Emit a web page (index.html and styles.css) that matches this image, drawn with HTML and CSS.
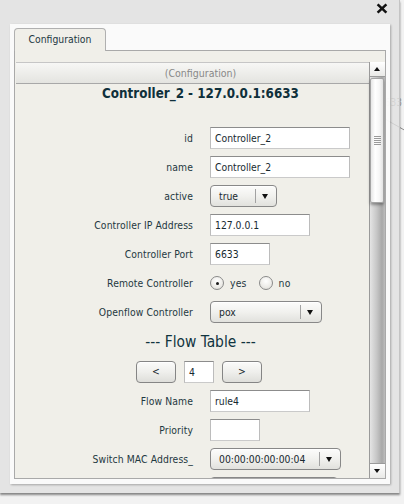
FILE: index.html
```html
<!DOCTYPE html>
<html>
<head>
<meta charset="utf-8">
<title>Configuration</title>
<link rel="stylesheet" href="styles.css">
</head>
<body>
<div class="canvas">
  <span class="node-label">6633</span>
  <svg class="edge" width="22" height="16" viewBox="0 0 22 16"><line x1="1" y1="3" x2="22" y2="15"/></svg>
</div>
<div class="dialog">
  <button class="close" type="button" aria-label="close">
    <svg width="12" height="11" viewBox="0 0 12 11"><path d="M1.6 1.3 L10.4 9.7 M10.4 1.3 L1.6 9.7"/></svg>
  </button>
  <div class="panel">
    <div class="tabs"><div class="tab">Configuration</div></div>
    <div class="pane">
      <div class="scrollpane">
        <div class="header">(Configuration)</div>
        <div class="content">
          <h1 class="title">Controller_2 - 127.0.0.1:6633</h1>
          <div class="form">
            <span class="label">id</span>
            <div class="text w140">Controller_2</div>

            <span class="label">name</span>
            <div class="text w140">Controller_2</div>

            <span class="label">active</span>
            <div class="combo w67"><span class="combo-value">true</span><span class="combo-arrow"></span></div>

            <span class="label">Controller IP Address</span>
            <div class="text w100">127.0.0.1</div>

            <span class="label">Controller Port</span>
            <div class="text w60">6633</div>

            <span class="label">Remote Controller</span>
            <div class="radios">
              <span class="radio on"></span><span class="radio-text">yes</span>
              <span class="radio"></span><span class="radio-text">no</span>
            </div>

            <span class="label">Openflow Controller</span>
            <div class="combo w112"><span class="combo-value">pox</span><span class="combo-arrow"></span></div>

            <div class="section">--- Flow Table ---</div>

            <div class="nav">
              <div class="btn">&lt;</div>
              <div class="text w30">4</div>
              <div class="btn">&gt;</div>
            </div>

            <span class="label">Flow Name</span>
            <div class="text w100">rule4</div>

            <span class="label">Priority</span>
            <div class="text w50"></div>

            <span class="label">Switch MAC Address_</span>
            <div class="combo w131"><span class="combo-value">00:00:00:00:00:04</span><span class="combo-arrow"></span></div>

            <span class="label"></span>
            <div class="combo w128"><span class="combo-value"></span><span class="combo-arrow"></span></div>
          </div>
        </div>
        <div class="scrollbar">
          <div class="sb-btn"><span class="tri-up"></span></div>
          <div class="sb-track">
            <div class="sb-thumb"><span class="grip"></span></div>
          </div>
          <div class="sb-btn down"><span class="tri-down"></span></div>
        </div>
      </div>
    </div>
  </div>
</div>
</body>
</html>
```
FILE: styles.css
```css
* { box-sizing: border-box; }

html, body {
  margin: 0;
  padding: 0;
}

body {
  width: 404px;
  height: 504px;
  overflow: hidden;
  position: relative;
  background: #f2f2f2;
  font-family: "DejaVu Sans Condensed", "DejaVu Sans", sans-serif;
  font-stretch: condensed;
  color: #1e3841;
}

/* background graph canvas */
.canvas { position: absolute; left: 0; top: 0; width: 404px; height: 504px; }
.node-label {
  position: absolute;
  right: 2px;
  top: 97px;
  font-size: 10px;
  line-height: 12px;
  color: #a4a4a4;
}
.edge { position: absolute; left: 384px; top: 116px; }
.edge line { stroke: #8e8e8e; stroke-width: 1; }

/* dialog */
.dialog {
  position: absolute;
  left: 0;
  top: 0;
  width: 400px;
  height: 493px;
  padding: 24px 9px 9px 10px;
  background: rgba(224, 224, 224, 0.78);
  border-right: 1px solid #c4c4c4;
  box-shadow: 0 2px 2px rgba(0, 0, 0, 0.45);
}

.close {
  position: absolute;
  left: 376px;
  top: 3px;
  width: 12px;
  height: 11px;
  padding: 0;
  border: 0;
  background: none;
  display: block;
}
.close svg { display: block; }
.close path { stroke: #111; stroke-width: 2.5; fill: none; }

.panel {
  height: 460px;
  padding: 4px 4px 5px 4px;
  background: rgba(255, 255, 255, 0.82);
  box-shadow: 1px 1px 2px rgba(0, 0, 0, 0.28);
}

.tabs { display: flex; }
.tab {
  position: relative;
  z-index: 1;
  width: 92px;
  height: 23px;
  margin-bottom: -1px;
  border: 1px solid #b0b0b0;
  border-bottom: 0;
  border-radius: 4px 4px 0 0;
  background: #f0efe9;
  text-align: center;
  font-size: 10.3px;
  line-height: 21px;
  color: #1c3742;
}

.pane {
  height: 429px;
  border: 1px solid #a9a9a9;
  background: #f0efe9;
  padding: 11px 0 0 1px;
}

.scrollpane {
  position: relative;
  height: 416px;
  overflow: hidden;
}

.header {
  height: 22px;
  border-top: 1px solid #c6c6c6;
  border-bottom: 1px solid #a8a8a8;
  background: linear-gradient(#f7f7f5, #e4e4e0);
  text-align: center;
  font-size: 10.5px;
  line-height: 20px;
  color: #888888;
}

.content { padding-top: 2px; }

.title {
  margin: 0;
  text-align: center;
  font-size: 13.3px;
  font-weight: bold;
  line-height: 16px;
  color: #0f303b;
}

.form {
  display: grid;
  grid-template-columns: 177px 1fr;
  column-gap: 17px;
  row-gap: 7px;
  align-items: center;
  margin-top: 25px;
}

.label {
  text-align: right;
  white-space: nowrap;
  font-size: 10.3px;
  letter-spacing: 0.1px;
  color: #1e3841;
}

.text {
  height: 22px;
  background: #fff;
  border: 1px solid;
  border-color: #8c8c8c #bcbcbc #cacaca #bcbcbc;
  padding: 0 4px;
  font-size: 10.3px;
  line-height: 20px;
  color: #18292f;
  white-space: nowrap;
}
.w30 { width: 30px; }
.w50 { width: 50px; }
.w60 { width: 60px; }
.w100 { width: 100px; }
.w140 { width: 140px; }
.w67 { width: 67px; }
.w112 { width: 112px; }
.w128 { width: 128px; }
.w131 { width: 131px; }

.combo {
  height: 22px;
  display: flex;
  align-items: center;
  border: 1px solid #888;
  border-radius: 4px;
  background: linear-gradient(#fcfcfb, #f1f1ee 50%, #e1e1dd);
  box-shadow: inset 0 1px 0 #fff;
}
.combo-value {
  flex: 1;
  padding-left: 8px;
  font-size: 10.3px;
  color: #18292f;
  white-space: nowrap;
}
.combo-arrow {
  width: 21px;
  height: 14px;
  border-left: 1px solid #a2a2a2;
  position: relative;
}
.combo-arrow::after {
  content: "";
  position: absolute;
  left: 6px;
  top: 5px;
  border-left: 3.5px solid transparent;
  border-right: 3.5px solid transparent;
  border-top: 5px solid #111;
}

.radios {
  height: 22px;
  display: flex;
  align-items: center;
}
.radio {
  width: 14px;
  height: 14px;
  border-radius: 50%;
  border: 1px solid #8a8a8a;
  background: radial-gradient(circle at 50% 35%, #ffffff, #ecebe7 60%, #d8d8d4);
  position: relative;
}
.radio.on::after {
  content: "";
  position: absolute;
  left: 4.5px;
  top: 4.5px;
  width: 3px;
  height: 3px;
  border-radius: 50%;
  background: #1a1a1a;
}
.radio-text {
  margin-left: 6px;
  margin-right: 12px;
  font-size: 10.3px;
  letter-spacing: 0.2px;
  color: #1e3841;
}

.section {
  grid-column: 1 / -1;
  height: 24px;
  text-align: center;
  font-size: 15.4px;
  line-height: 24px;
  color: #10343f;
}

.nav {
  grid-column: 1 / -1;
  display: flex;
  justify-content: center;
  gap: 8px;
  margin-right: 3px;
}
.btn {
  width: 40px;
  height: 22px;
  border: 1px solid #858585;
  border-radius: 4px;
  background: linear-gradient(#fbfbfa, #efefec 50%, #dededa);
  box-shadow: inset 0 1px 0 #fff;
  text-align: center;
  font-size: 10.3px;
  line-height: 19px;
  color: #18292f;
}

/* scrollbar overlays right edge of the viewport */
.scrollbar {
  position: absolute;
  top: 0;
  right: 0;
  width: 16px;
  height: 416px;
  border-left: 1px solid #9a9a9a;
  display: flex;
  flex-direction: column;
  background: #f0f0ee;
}
.sb-btn {
  height: 15px;
  border-bottom: 1px solid #9a9a9a;
  background: linear-gradient(#ffffff, #e9e9e7);
  position: relative;
}
.sb-btn.down {
  border-bottom: 0;
  border-top: 1px solid #9a9a9a;
}
.tri-up, .tri-down {
  position: absolute;
  left: 4px;
  border-left: 3.5px solid transparent;
  border-right: 3.5px solid transparent;
}
.tri-up { top: 5px; border-bottom: 4px solid #111; }
.tri-down { top: 5px; border-top: 4px solid #111; }

.sb-track {
  flex: 1;
  padding: 1px 1px 0 0;
  background: linear-gradient(to right, #e4e4e4, #c6c6c6 45%, #a8a8a8 80%, #bdbdbd);
}
.sb-thumb {
  height: 125px;
  border: 1px solid #a4a4a4;
  border-radius: 2px;
  background: linear-gradient(to right, #e6e6e6, #ffffff 35%, #f6f6f6 70%, #e2e2e2);
  box-shadow: 0 2px 3px rgba(0, 0, 0, 0.35);
  display: flex;
  align-items: center;
  justify-content: center;
}
.grip {
  width: 7px;
  height: 9px;
  background: repeating-linear-gradient(#9a9a9a 0 1px, transparent 1px 2px);
}
```
